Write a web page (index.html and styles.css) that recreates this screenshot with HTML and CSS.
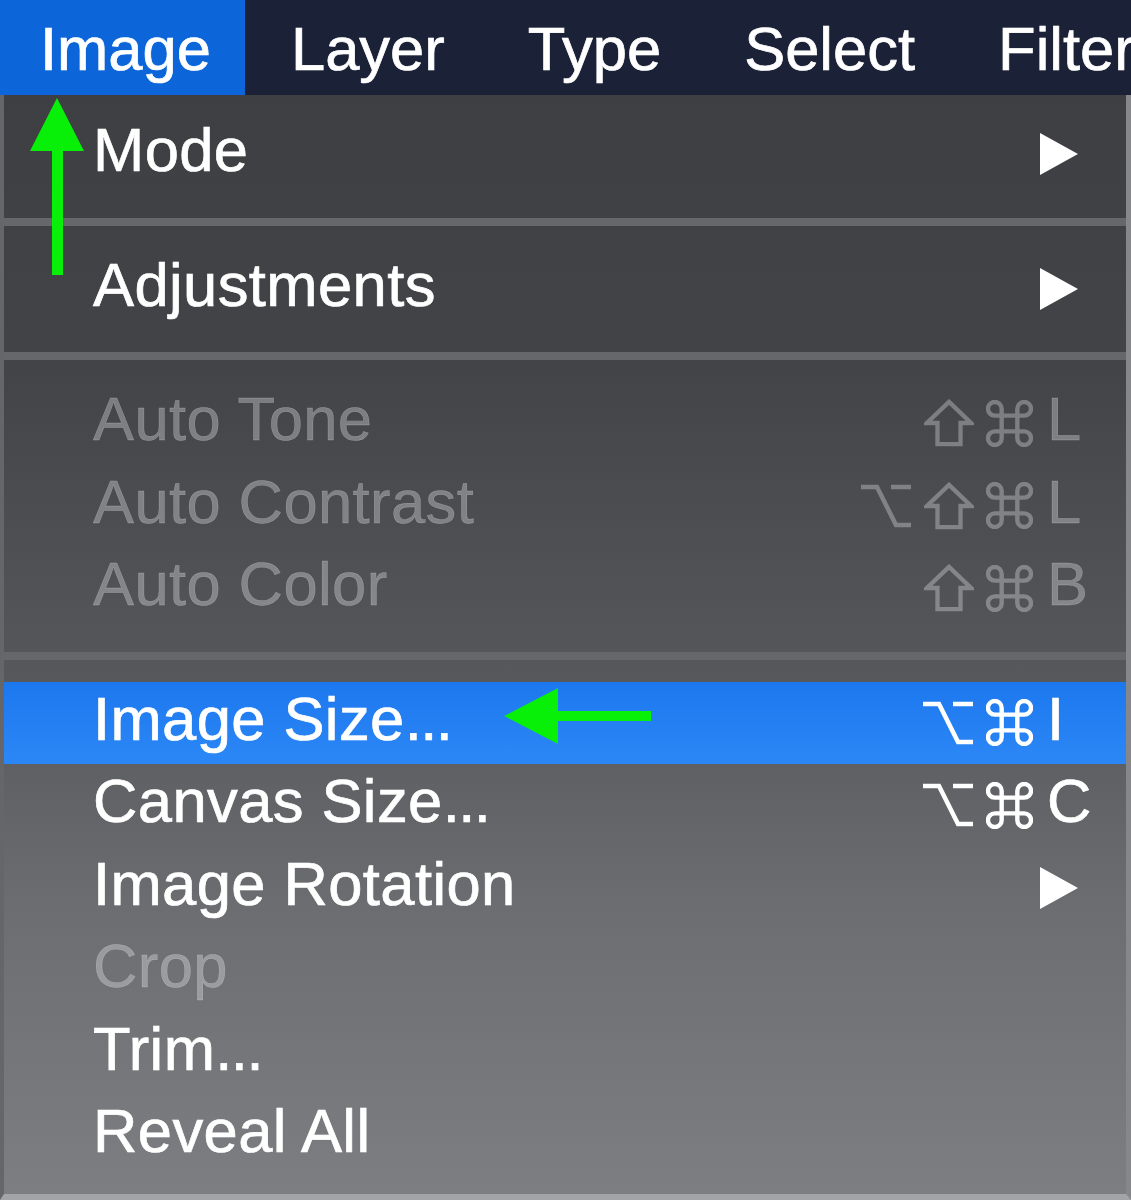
FILE: index.html
```html
<!DOCTYPE html>
<html lang="en">
<head>
<meta charset="utf-8">
<title>Image menu</title>
<link rel="stylesheet" href="styles.css">
</head>
<body>
<div class="screen">
  <header class="menubar">
    <span class="bar-item active">Image</span>
    <span class="bar-item">Layer</span>
    <span class="bar-item">Type</span>
    <span class="bar-item">Select</span>
    <span class="bar-item">Filter</span>
  </header>

  <div class="menu">
    <div class="item">
      <span class="label">Mode</span>
      <span class="sub"><svg viewBox="0 0 38 42"><path d="M0 0 L38 21 L0 42 Z"/></svg></span>
    </div>
    <div class="sep"></div>
    <div class="item">
      <span class="label">Adjustments</span>
      <span class="sub"><svg viewBox="0 0 38 42"><path d="M0 0 L38 21 L0 42 Z"/></svg></span>
    </div>
    <div class="sep"></div>
    <div class="item disabled">
      <span class="label">Auto Tone</span>
      <span class="keys">
        <span class="mods">
          <svg class="k-shift" viewBox="0 0 52 50"><path d="M26 3 L49 25 L38 25 L38 47 L14 47 L14 25 L3 25 Z"/></svg>
          <svg class="k-cmd" viewBox="0 0 48 48"><path d="M16 16 V9 A7 7 0 1 0 9 16 H39 A7 7 0 1 0 32 9 V39 A7 7 0 1 0 39 32 H9 A7 7 0 1 0 16 39 Z"/></svg>
        </span>
        <span class="key">L</span>
      </span>
    </div>
    <div class="item disabled">
      <span class="label">Auto Contrast</span>
      <span class="keys">
        <span class="mods">
          <svg class="k-opt" viewBox="0 0 52 46"><path d="M1 4 H17 L36 42 H51 M31 4 H51"/></svg>
          <svg class="k-shift" viewBox="0 0 52 50"><path d="M26 3 L49 25 L38 25 L38 47 L14 47 L14 25 L3 25 Z"/></svg>
          <svg class="k-cmd" viewBox="0 0 48 48"><path d="M16 16 V9 A7 7 0 1 0 9 16 H39 A7 7 0 1 0 32 9 V39 A7 7 0 1 0 39 32 H9 A7 7 0 1 0 16 39 Z"/></svg>
        </span>
        <span class="key">L</span>
      </span>
    </div>
    <div class="item disabled">
      <span class="label">Auto Color</span>
      <span class="keys">
        <span class="mods">
          <svg class="k-shift" viewBox="0 0 52 50"><path d="M26 3 L49 25 L38 25 L38 47 L14 47 L14 25 L3 25 Z"/></svg>
          <svg class="k-cmd" viewBox="0 0 48 48"><path d="M16 16 V9 A7 7 0 1 0 9 16 H39 A7 7 0 1 0 32 9 V39 A7 7 0 1 0 39 32 H9 A7 7 0 1 0 16 39 Z"/></svg>
        </span>
        <span class="key">B</span>
      </span>
    </div>
    <div class="sep"></div>
    <div class="item selected">
      <span class="label">Image Size<span class="dots">...</span></span>
      <span class="keys">
        <span class="mods">
          <svg class="k-opt" viewBox="0 0 52 46"><path d="M1 4 H17 L36 42 H51 M31 4 H51"/></svg>
          <svg class="k-cmd" viewBox="0 0 48 48"><path d="M16 16 V9 A7 7 0 1 0 9 16 H39 A7 7 0 1 0 32 9 V39 A7 7 0 1 0 39 32 H9 A7 7 0 1 0 16 39 Z"/></svg>
        </span>
        <span class="key">I</span>
      </span>
    </div>
    <div class="item">
      <span class="label">Canvas Size<span class="dots">...</span></span>
      <span class="keys">
        <span class="mods">
          <svg class="k-opt" viewBox="0 0 52 46"><path d="M1 4 H17 L36 42 H51 M31 4 H51"/></svg>
          <svg class="k-cmd" viewBox="0 0 48 48"><path d="M16 16 V9 A7 7 0 1 0 9 16 H39 A7 7 0 1 0 32 9 V39 A7 7 0 1 0 39 32 H9 A7 7 0 1 0 16 39 Z"/></svg>
        </span>
        <span class="key">C</span>
      </span>
    </div>
    <div class="item">
      <span class="label">Image Rotation</span>
      <span class="sub"><svg viewBox="0 0 38 42"><path d="M0 0 L38 21 L0 42 Z"/></svg></span>
    </div>
    <div class="item disabled">
      <span class="label">Crop</span>
    </div>
    <div class="item">
      <span class="label">Trim<span class="dots">...</span></span>
    </div>
    <div class="item">
      <span class="label">Reveal All</span>
    </div>
  </div>

  <svg class="arrow-up" viewBox="0 0 54 180"><path d="M27 0 L54 53 L33 53 L33 177 L22 177 L22 53 L0 53 Z"/></svg>
  <svg class="arrow-left" viewBox="0 0 148 56"><path d="M0 28 L54 0 L54 23 L147 23 L147 33 L54 33 L54 56 Z"/></svg>
</div>
</body>
</html>
```

FILE: styles.css
```css
html, body {
  margin: 0;
  padding: 0;
  background: #1b2137;
}

.screen {
  position: relative;
  width: 1131px;
  height: 1200px;
  overflow: hidden;
  font-family: "Liberation Sans", Arial, sans-serif;
  color: #ffffff;
}

.menubar {
  height: 95px;
  display: flex;
  align-items: stretch;
  background: #1b2137;
  white-space: nowrap;
}

.bar-item {
  display: flex;
  align-items: center;
  padding: 2px 37px 0 46px;
  font-size: 61.5px;
  line-height: 1;
  -webkit-text-stroke: 0.7px #ffffff;
}

.bar-item.active {
  background: #0c66d9;
  padding-left: 40px;
  padding-right: 34px;
}

.menu {
  height: 1105px;
  box-sizing: border-box;
  padding-top: 18px;
  border-left: 4px solid #65666a;
  border-right: 5px solid #86878b;
  border-bottom: 6px solid #a3a4a7;
  background: linear-gradient(to bottom, #3e3f43 0%, #434448 25%, #56575b 52%, #6d6e72 75%, #7d7e82 100%);
}

.item {
  height: 82.5px;
  box-sizing: border-box;
  display: flex;
  align-items: center;
  padding: 0 39px 9px 89px;
  font-size: 61.5px;
  line-height: 1;
  white-space: nowrap;
}

.label {
  flex: 1;
  letter-spacing: 0.4px;
  -webkit-text-stroke: 0.7px #ffffff;
}

.dots {
  letter-spacing: -1.5px;
}

.item.disabled .label,
.item.disabled .key {
  color: rgba(255, 255, 255, 0.3);
  -webkit-text-stroke: 0.4px rgba(255, 255, 255, 0.3);
}

.item.disabled svg path {
  stroke: rgba(255, 255, 255, 0.3);
}

.item.selected {
  background: linear-gradient(to bottom, #1c78ee, #2c87f6);
}

.sep {
  height: 8px;
  margin: 22px 0;
  background: #66676b;
}

.sub {
  display: flex;
  margin-top: 9px;
  margin-right: 9px;
}

.sub svg {
  width: 38px;
  height: 42px;
  fill: #ffffff;
}

.keys {
  display: flex;
  align-items: center;
}

.mods {
  display: flex;
  align-items: center;
  gap: 12px;
  margin-top: 9px;
}

.mods svg {
  fill: none;
  stroke: #ffffff;
  stroke-width: 4.5;
  stroke-linejoin: miter;
}

.k-shift { width: 50px; height: 48px; }
.k-cmd { width: 47px; height: 47px; }
.k-opt { width: 52px; height: 46px; }

.key {
  width: 40px;
  margin-left: 14px;
  -webkit-text-stroke: 0.7px #ffffff;
}

.arrow-up {
  position: absolute;
  left: 30px;
  top: 98px;
  width: 54px;
  height: 180px;
  fill: #08ef08;
}

.arrow-left {
  position: absolute;
  left: 504px;
  top: 688px;
  width: 148px;
  height: 56px;
  fill: #08ef08;
}
```
